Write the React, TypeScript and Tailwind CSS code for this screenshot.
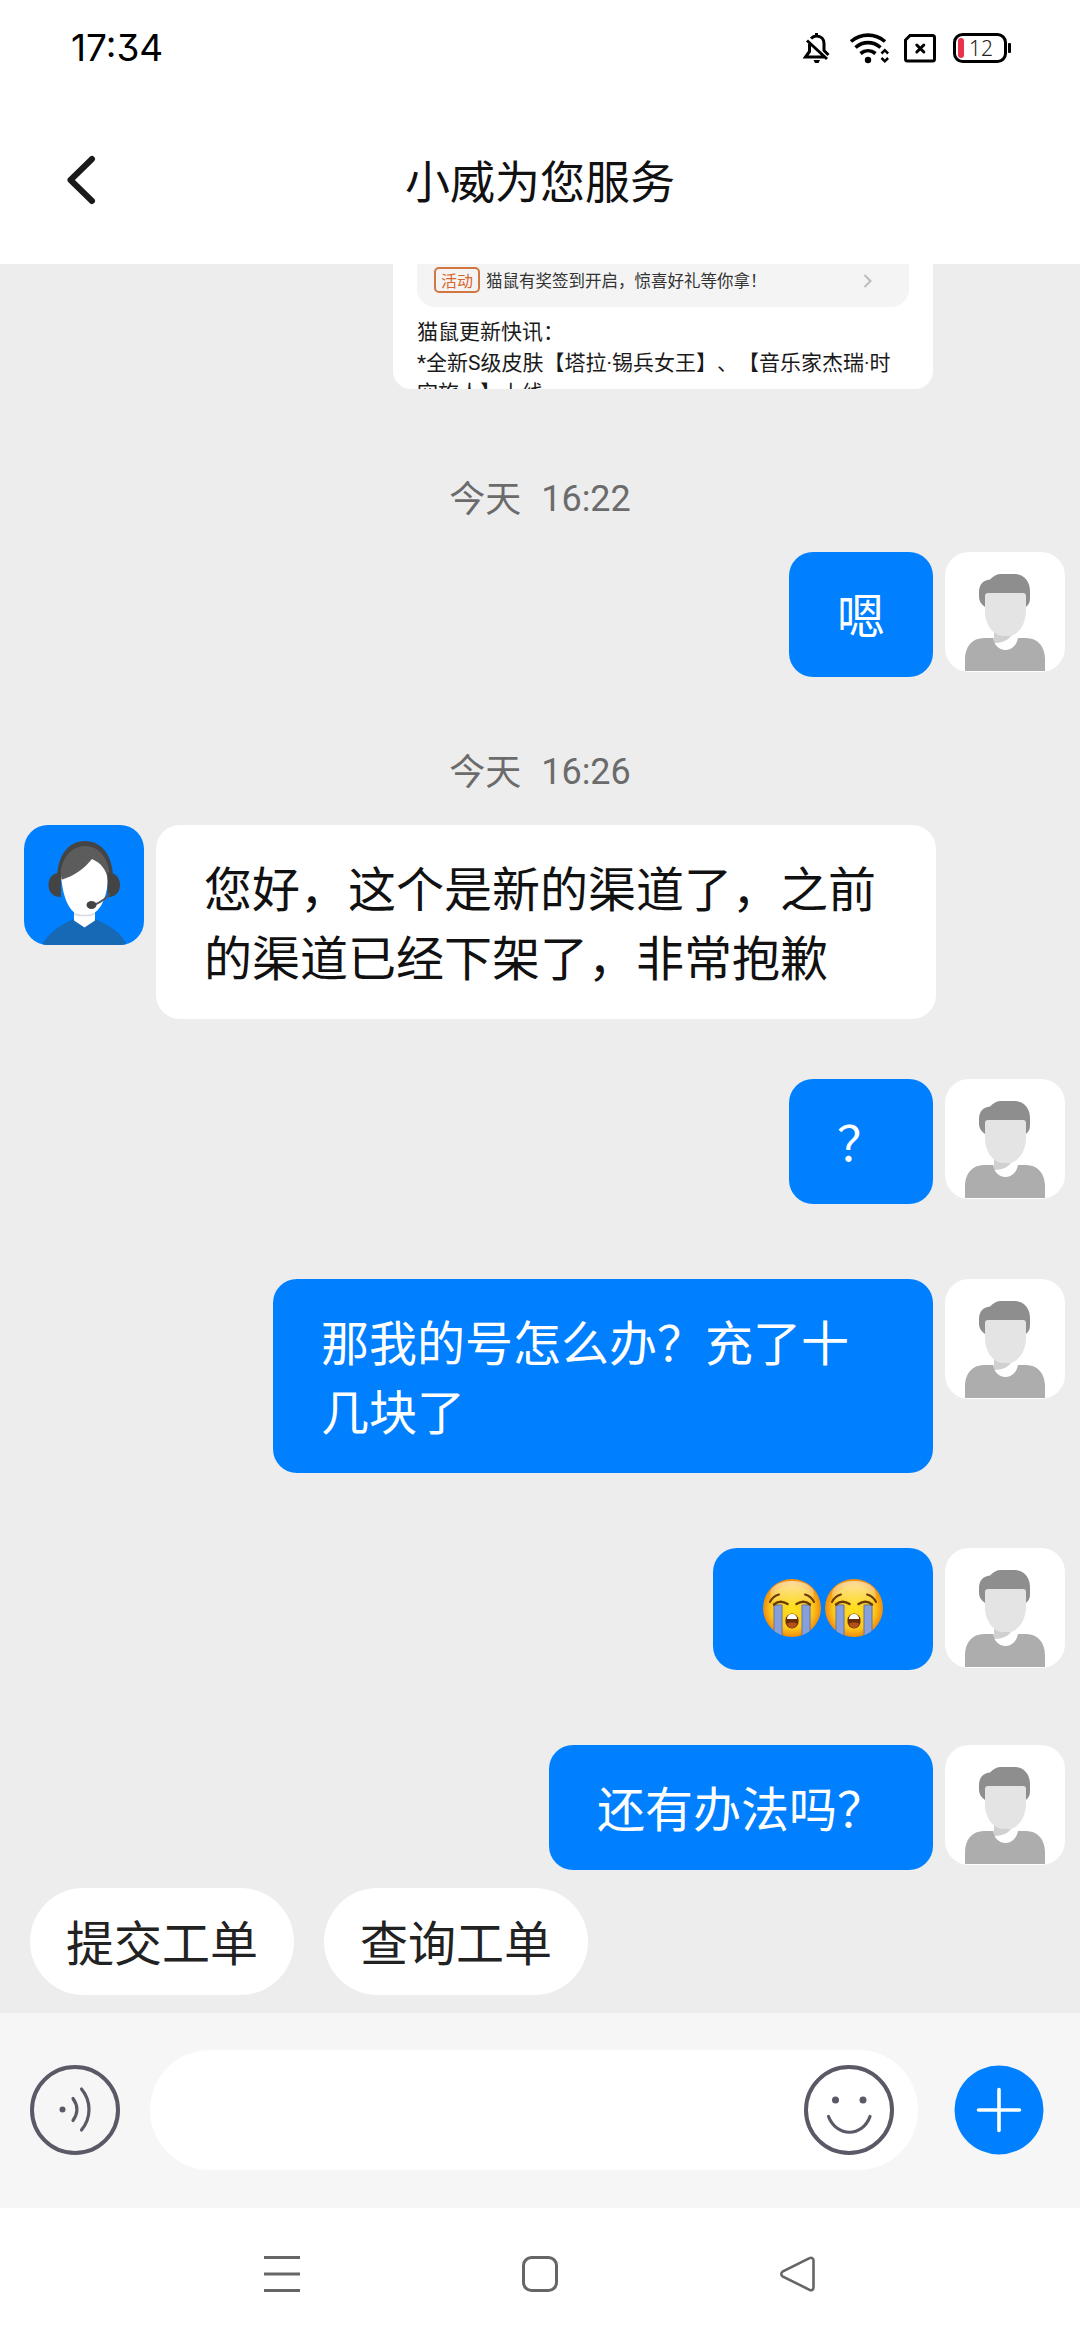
import type { ReactNode } from "react"

interface Message {
    id: number
    from: "user" | "agent"
    kind?: "text" | "emoji"
    text: string
    time?: string
    // space above the row
    gap: string
}

const MESSAGES: Message[] = [
    { id: 1, from: "user", text: "嗯", time: "16:22", gap: "mt-[83px]" },
    { id: 2, from: "agent", text: "您好，这个是新的渠道了，之前的渠道已经下架了，非常抱歉", time: "16:26", gap: "mt-[68px]" },
    { id: 3, from: "user", text: "？", gap: "mt-[60px]" },
    { id: 4, from: "user", text: "那我的号怎么办？充了十几块了", gap: "mt-[75px]" },
    { id: 5, from: "user", kind: "emoji", text: "", gap: "mt-[75px]" },
    { id: 6, from: "user", text: "还有办法吗？", gap: "mt-[75px]" },
]

const QUICK_ACTIONS = ["提交工单", "查询工单"]

function StatusIcons() {
    return (
        <svg width="210" height="34" viewBox="802 31 210 34" fill="none" stroke="#000">
            {/* muted bell */}
            <path d="M816.5 33v3M811 38.500c1.600-1.700 3.400-2.500 5.500-2.500 4.500 0 7.500 3.200 7.500 7.500v7l4.500 4.500M809.500 44v7.500l-4 5.500h19.500M807 40.500l20 18.500" strokeWidth="3" />
            <path d="M813.500 60h6.500l-1.500 3h-3.500z" fill="#000" stroke="none" />
            {/* wifi */}
            <g strokeWidth="3.600">
                <path d="M851 41.500c10-8.500 24-8.500 34 0" />
                <path d="M855.500 47.500c7.500-6.500 17.500-6.500 25 0" />
                <path d="M860.500 53.500c4.500-3.700 10.500-3.700 15 0" />
            </g>
            <circle cx="868" cy="60" r="3.200" fill="#000" stroke="none" />
            <path d="M881.500 53.500l3.300-3.300 3.300 3.300M881.500 58l3.300 3.300 3.300-3.300" strokeWidth="2.500" />
            {/* empty sim */}
            <path d="M910 35.500h22.500a2 2 0 0 1 2 2v21.500a2 2 0 0 1-2 2h-25a2 2 0 0 1-2-2v-19z" strokeWidth="3" />
            <path d="M916.800 45l7 7M923.800 45l-7 7" strokeWidth="3" strokeLinecap="round" />
            {/* battery */}
            <rect x="954.500" y="34.500" width="51" height="27" rx="8" strokeWidth="3" />
            <rect x="958" y="38" width="6" height="20" rx="3" fill="#e8334a" stroke="none" />
            <rect x="1008" y="43" width="3" height="10" rx="1" fill="#000" stroke="none" />
            <text x="969" y="55.500" fontSize="21" fill="#222" stroke="none" className="font-['Noto_Sans',sans-serif] font-light">
                12
            </text>
        </svg>
    )
}

function UserAvatar() {
    return (
        <svg width="120" height="120" viewBox="0 0 120 120" className="shrink-0 rounded-3xl bg-white">
            <path d="M34 40c0-7 4-12 11-12.500 3-3.500 7-5.500 11-5.500h13c10 0 16 7.500 16 17v7c0 4-1 6-4 9H40c-4-3-6-6-6-10z" fill="#8e8e8e" />
            <path d="M49 80h22v7c0 5-5 8-11 8s-11-3-11-7z" fill="#fff" />
            <path d="M49 78h20c-2 7-8 13-20 13z" fill="#d0d0d0" />
            <path d="M40 44c0-2 1-3 3-3h35c2 0 3 1 3 3v15c0 14-9 25-17 25h-6c-9 0-18-11-18-24z" fill="#e4e4e4" />
            <path d="M20 119v-12c0-12 7-21 19-21h9.500c0 6 5 12 12 12S72 92 73 86h8c12 0 19 9 19 21v12z" fill="#adadad" />
        </svg>
    )
}

function AgentAvatar() {
    return (
        <svg width="120" height="120" viewBox="0 0 120 120" className="shrink-0 rounded-3xl bg-[#0080ff]">
            <path d="M18 120c7-13 18-20 32-26h21c14 6 26 13 32 26z" fill="#1768b5" />
            <path d="M50 86h21v9.500L60.500 102.500 50 95.500z" fill="#fff" />
            <path d="M33 54C33 31 44 16 61 16s28 15 28 38z" fill="#444" />
            <path d="M36 55C36 35 46 21 61 21s25 14 25 34z" fill="#5c5c5c" />
            <path d="M37 50C39 76 47 91 60.500 91S82 77 84 56C83 45 77 38 68 34c-8 10-18 17-31 21z" fill="#fff" />
            <path d="M50 88.500c5 2.800 16 2.800 21 0" stroke="#d8dbe0" strokeWidth="1.500" fill="none" />
            <path d="M37 47.500c-8 0-12.500 5-12.500 12.500S29 72 37 72zM83.500 47.500c8 0 12.500 5 12.500 12.500S91.500 72 83.500 72z" fill="#444" />
            <path d="M86 68c-3 5-9 9-16 12" stroke="#555" strokeWidth="2" fill="none" />
            <ellipse cx="67.500" cy="80" rx="5" ry="4" fill="#444" />
        </svg>
    )
}

function CryingFace() {
    return (
        <svg width="62" height="62" viewBox="0 0 62 62">
            <defs>
                <radialGradient id="skin" cx="0.5" cy="0.5" r="0.5">
                    <stop offset="0" stopColor="#ffe01f" />
                    <stop offset="0.720" stopColor="#fdc81c" />
                    <stop offset="1" stopColor="#f08b0c" />
                </radialGradient>
                <linearGradient id="shine" x1="0" y1="0" x2="0" y2="1">
                    <stop offset="0" stopColor="#fff" stopOpacity="0.600" />
                    <stop offset="1" stopColor="#fff" stopOpacity="0" />
                </linearGradient>
                <clipPath id="face">
                    <circle cx="31" cy="31" r="29" />
                </clipPath>
            </defs>
            <circle cx="31" cy="31" r="29" fill="url(#skin)" />
            <ellipse cx="31" cy="17" rx="22" ry="13" fill="url(#shine)" />
            <g clipPath="url(#face)">
                <path d="M13 28h8v34h-8zM41 28h8v34h-8z" fill="#85a0dc" stroke="#66749e" strokeWidth="1" />
            </g>
            <g fill="none" stroke="#6a3c05" strokeLinecap="round">
                <path d="M9 25c2-4 5-6.500 9-7.500M53 25c-2-4-5-6.500-9-7.500" strokeWidth="2" />
                <path d="M13 27.500c4-3.500 9-3.500 13.500-.5M35.500 27c4.500-3 9.500-3 13.500.5" strokeWidth="2.500" />
            </g>
            <rect x="24.500" y="36.500" width="13" height="15" rx="6.500" fill="#672c08" />
            <path d="M26 42c0-3 2-5 5-5s5 2 5 5z" fill="#fff" />
            <path d="M26 46.500c2-1.500 8-1.500 10 0-.5 3-2.500 4.500-5 4.500s-4.500-1.500-5-4.500z" fill="#b5501c" />
        </svg>
    )
}

function Bubble({ message }: { message: Message }) {
    if (message.kind === "emoji") {
        return (
            <div className="flex h-[122px] items-center rounded-3xl bg-[#0080ff] px-12 pb-0.5">
                <CryingFace />
                <CryingFace />
            </div>
        )
    }
    if (message.from === "agent") {
        return (
            <div className="w-[780px] rounded-3xl bg-white px-12 pt-[27px] pb-[29px] text-5xl/[69px] text-[#111]">{message.text}</div>
        )
    }
    return (
        <div className="max-w-[660px] rounded-3xl bg-[#0080ff] px-12 pt-[27px] pb-[29px] text-5xl/[69px] text-white">{message.text}</div>
    )
}

function MessageRow({ message }: { message: Message }) {
    return (
        <div className={message.gap}>
            {message.time && (
                <div className="mb-[26px] flex h-[54px] items-center justify-center gap-5 text-4xl text-[#6b6b6b]">
                    <span className="pb-1.5">今天</span>
                    <span className="font-[Roboto,sans-serif]">{message.time}</span>
                </div>
            )}
            {message.from === "agent" ? (
                <div className="flex items-start gap-3 pl-6">
                    <AgentAvatar />
                    <Bubble message={message} />
                </div>
            ) : (
                <div className="flex items-start justify-end gap-3 pr-[15px]">
                    <Bubble message={message} />
                    <UserAvatar />
                </div>
            )}
        </div>
    )
}

function NewsCard() {
    return (
        <div className="ml-[393px] h-[125px] w-[540px] overflow-hidden rounded-b-[18px] bg-white px-6 text-[21px]/[30.5px] text-[#1a1a1a]">
            <div className="flex h-[43px] items-start rounded-b-[18px] bg-[#f4f4f4] pl-[17px] pr-9">
                <span className="mt-[3px] flex h-[26px] w-[46px] items-center justify-center rounded-[5px] border-2 border-[#d2773f] text-[16px] text-[#d9662a]">
                    活动
                </span>
                <span className="ml-[6px] text-[16.5px]/[33px] text-[#333]">猫鼠有奖签到开启，惊喜好礼等你拿！</span>
                <svg width="10" height="14" viewBox="0 0 10 14" className="mt-[10px] ml-auto" fill="none" stroke="#bbb" strokeWidth="2">
                    <path d="M1.500 1l6 6-6 6" />
                </svg>
            </div>
            {/* Roboto first keeps the middle dots narrow */}
            <div className="mt-[10px] font-[Roboto,'Noto_Sans_CJK_SC',sans-serif] whitespace-nowrap [text-spacing-trim:space-all] [font-kerning:none]">
                <p className="h-[30.5px]">猫鼠更新快讯：</p>
                <p className="h-[30.5px]">*全新S级皮肤【塔拉·锡兵女王】、【音乐家杰瑞·时</p>
                <p className="h-[30.5px]">空旅人】上线</p>
            </div>
        </div>
    )
}

function RoundIcon({ children }: { children: ReactNode }) {
    return (
        <svg width="90" height="90" viewBox="0 0 90 90" className="shrink-0" fill="none" stroke="#5b5966" strokeLinecap="round">
            <circle cx="45" cy="45" r="43" strokeWidth="4" />
            {children}
        </svg>
    )
}

function InputBar() {
    return (
        <div className="flex h-[195px] items-center bg-[#f6f6f6] pb-[1px] pl-[30px] pr-9">
            <RoundIcon>
                <circle cx="32.500" cy="44.500" r="3" fill="#5b5966" stroke="none" />
                <path d="M43 33.500c5 7 5 15 0 22M51.500 24c10 12 10 29 0 41" strokeWidth="3.200" />
            </RoundIcon>
            <div className="ml-[30px] flex h-[120px] w-[768px] items-center justify-end rounded-full bg-white pr-6">
                <RoundIcon>
                    <circle cx="31.500" cy="35" r="3.500" fill="#5b5966" stroke="none" />
                    <circle cx="59" cy="35" r="3.500" fill="#5b5966" stroke="none" />
                    <path d="M24.500 51.500c8 21 34 21 41.500 0" strokeWidth="3.200" />
                </RoundIcon>
            </div>
            <svg width="90" height="90" viewBox="0 0 90 90" className="ml-auto shrink-0">
                <circle cx="45" cy="45" r="44.500" fill="#0080ff" />
                <path d="M24.500 45h41M45 24.500v41" stroke="#fff" strokeWidth="3.600" strokeLinecap="round" />
            </svg>
        </div>
    )
}

function NavBar() {
    return (
        <div className="flex h-[132px] items-center justify-between bg-white px-[264px]">
            <svg width="36" height="36" viewBox="0 0 36 36" stroke="#666" strokeWidth="3">
                <path d="M0 1.500h36M0 18h36M0 34.500h36" />
            </svg>
            <svg width="36" height="36" viewBox="0 0 36 36" fill="none" stroke="#666" strokeWidth="3">
                <rect x="1.500" y="1.500" width="33" height="33" rx="8" />
            </svg>
            <svg width="36" height="36" viewBox="0 0 36 36" fill="none" stroke="#666" strokeWidth="2.600">
                <path d="M29.500 2.200c2-1.100 4 0 4 2.300v27c0 2.300-2 3.400-4 2.300L2.500 20.300c-1.600-1.100-1.600-3.500 0-4.600z" />
            </svg>
        </div>
    )
}

export default function App() {
    return (
        <div lang="zh-CN" className="flex h-[2340px] w-[1080px] flex-col overflow-hidden bg-white font-['Noto_Sans_CJK_SC',sans-serif]">
            <div className="flex h-24 items-center justify-between pl-[71px] pr-[68px]">
                <span className="font-[Inter,sans-serif] text-[37px] text-black [font-feature-settings:'cv09']">17:34</span>
                <StatusIcons />
            </div>

            <header className="grid h-[168px] grid-cols-[1fr_auto_1fr] items-center px-16">
                <svg width="34" height="50" viewBox="64 155 34 50" fill="none" stroke="#1a1a1a" strokeWidth="6" strokeLinecap="round" strokeLinejoin="round">
                    <path d="M92 159l-21.500 21L92 201" />
                </svg>
                <h1 className="text-[45px] text-[#111]">小威为您服务</h1>
            </header>

            <main className="flex h-[1749px] flex-col bg-[#ededed]">
                <NewsCard />
                {MESSAGES.map((message) => (
                    <MessageRow key={message.id} message={message} />
                ))}
                <div className="mt-[18px] flex gap-[30px] pl-[30px]">
                    {QUICK_ACTIONS.map((label) => (
                        <button key={label} type="button" className="h-[107px] rounded-full bg-white px-9 pb-[3px] text-5xl text-[#222]">
                            {label}
                        </button>
                    ))}
                </div>
            </main>

            <InputBar />
            <NavBar />
        </div>
    )
}
